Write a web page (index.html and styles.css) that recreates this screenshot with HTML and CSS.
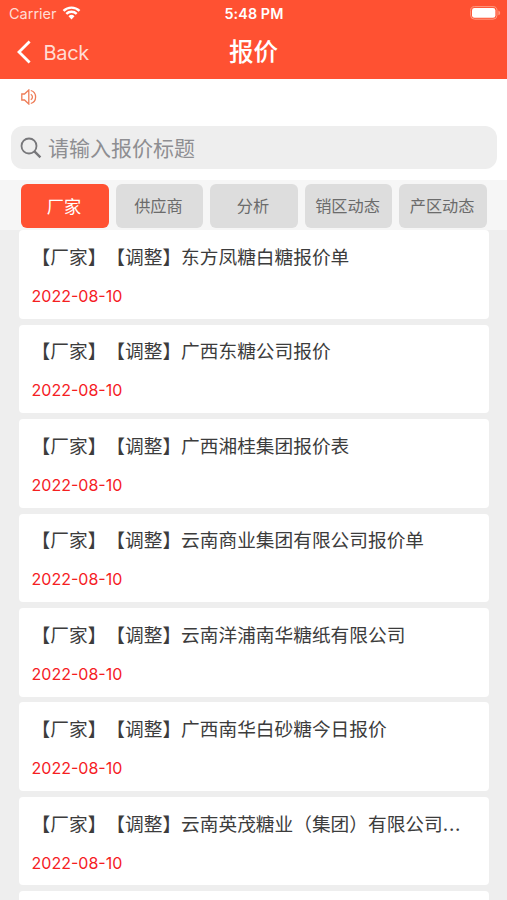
FILE: index.html
```html
<!DOCTYPE html>
<html lang="zh-CN">

<head>
    <meta charset="UTF-8">
    <title>报价</title>
    <link rel="stylesheet" href="styles.css">
</head>

<body>
    <header class="header">
        <div class="status">
            <div class="carrier">
                <span>Carrier</span>
                <svg class="wifi" width="19" height="14" viewBox="0 0 18 14">
                    <path d="M1 4.9a11.4 11.4 0 0 1 16 0M3.8 7.9a7.4 7.4 0 0 1 10.4 0" fill="none" stroke="#fff" stroke-width="2.4" />
                    <path d="M6 10.3a4.3 4.3 0 0 1 6 0L9 13.4z" fill="#fff" />
                </svg>
            </div>
            <div class="time">5:48 PM</div>
            <svg class="battery" width="31" height="14" viewBox="0 0 31 14">
                <rect x=".6" y=".6" width="26.4" height="12.6" rx="4" fill="none" stroke="#ff9a82" />
                <rect x="2" y="2" width="23.4" height="9.8" rx="2.4" fill="#fff" />
                <path d="M28.4 4.6v4.6q1.8-.7 1.8-2.3t-1.8-2.3z" fill="#ff9a82" />
            </svg>
        </div>
        <div class="nav">
            <a class="back" href="#">
                <svg width="14" height="24" viewBox="0 0 14 24">
                    <path d="M12.6 1.4L2 12l10.6 10.6" fill="none" stroke="#fff" stroke-width="2.8" />
                </svg>
                <span>Back</span>
            </a>
            <h1>报价</h1>
        </div>
    </header>

    <div class="notice">
        <svg width="16" height="16" viewBox="0 0 16 16" fill="none" stroke="#ee7d58" stroke-width="1.3">
            <path d="M.8 5h2.7L7.8 1v14L3.5 11H.8z" />
            <path d="M9.8 5.2a3.2 3.2 0 0 1 0 5.6M9.8 1.5a6.8 6.8 0 0 1 0 13" />
        </svg>
    </div>

    <div class="search">
        <div class="search-box">
            <svg width="22" height="22" viewBox="0 0 22 22" fill="none" stroke="#77777a">
                <circle cx="9" cy="9" r="7.5" stroke-width="1.8" />
                <path d="M14.4 14.4l6 6" stroke-width="2.4" />
            </svg>
            <span>请输入报价标题</span>
        </div>
    </div>

    <nav class="tabs">
        <div class="tab active">厂家</div>
        <div class="tab">供应商</div>
        <div class="tab">分析</div>
        <div class="tab">销区动态</div>
        <div class="tab">产区动态</div>
    </nav>

    <main class="list">
        <div class="card">
            <p class="title">【厂家】【调整】东方凤糖白糖报价单</p>
            <p class="date">2022-08-10</p>
        </div>
        <div class="card">
            <p class="title">【厂家】【调整】广西东糖公司报价</p>
            <p class="date">2022-08-10</p>
        </div>
        <div class="card">
            <p class="title">【厂家】【调整】广西湘桂集团报价表</p>
            <p class="date">2022-08-10</p>
        </div>
        <div class="card">
            <p class="title">【厂家】【调整】云南商业集团有限公司报价单</p>
            <p class="date">2022-08-10</p>
        </div>
        <div class="card">
            <p class="title">【厂家】【调整】云南洋浦南华糖纸有限公司</p>
            <p class="date">2022-08-10</p>
        </div>
        <div class="card">
            <p class="title">【厂家】【调整】广西南华白砂糖今日报价</p>
            <p class="date">2022-08-10</p>
        </div>
        <div class="card">
            <p class="title">【厂家】【调整】云南英茂糖业（集团）有限公司<span class="dots">...</span></p>
            <p class="date">2022-08-10</p>
        </div>
        <div class="card last"></div>
    </main>
</body>

</html>
```
FILE: styles.css
```css
* {
    box-sizing: border-box;
}

body {
    margin: 0;
    height: 900px;
    overflow: hidden;
    display: flex;
    flex-direction: column;
    background-color: #eee;
    font-family: Inter, "Noto Sans CJK SC", sans-serif;
    text-spacing-trim: space-all;
}

h1,
p {
    margin: 0;
}

svg {
    display: block;
    flex: none;
}

.header {
    flex: none;
    height: 79px;
    background-color: #ff5132;
    color: white;
}

.status {
    display: grid;
    grid-template-columns: 1fr auto 1fr;
    align-items: center;
    height: 27px;
    padding: 0 6px 0 9px;
    font-size: 14.5px;
}

.carrier {
    display: flex;
    gap: 5px;
    align-items: center;
    color: #ffdcd4;
}

.wifi {
    margin-top: -2px;
}

.time {
    margin-right: 2px;
    font-size: 14.3px;
    font-weight: 600;
    letter-spacing: 0.1px;
}

.battery {
    justify-self: end;
    margin-top: -1px;
}

.nav {
    display: grid;
    grid-template-columns: 1fr auto 1fr;
    align-items: center;
    height: 50px;
    padding: 0 17px;
}

.back {
    display: flex;
    align-items: center;
    gap: 12.5px;
    color: #ffdcd4;
    font-size: 20px;
    letter-spacing: -0.3px;
    text-decoration: none;
}

.back span {
    margin-top: 1px;
}

h1 {
    font-size: 24.5px;
    font-weight: 500;
    line-height: 50px;
}

.notice {
    flex: none;
    height: 47px;
    padding: 9.5px 21px;
    background-color: white;
}

.search {
    flex: none;
    padding: 0 10px 11px 11px;
    background-color: white;
}

.search-box {
    display: flex;
    align-items: center;
    gap: 6px;
    height: 43px;
    padding: 0 9px;
    border-radius: 12px;
    background-color: #eee;
    color: #8e8e92;
    font-size: 21px;
}

.search-box span {
    margin-top: -2px;
}

.tabs {
    flex: none;
    display: flex;
    gap: 6.8px;
    height: 50px;
    padding: 4px 20px 2px 21px;
    background-color: #f6f6f6;
}

.tab {
    flex: 1 1 0;
    padding-right: 2px;
    border-radius: 6px;
    background-color: #ddd;
    color: #6b6b6b;
    font-size: 16.2px;
    line-height: 45px;
    text-align: center;
    white-space: nowrap;
}

.tab.active {
    background-color: #ff5132;
    color: white;
    font-size: 17.2px;
}

.list {
    flex: 1;
    min-height: 0;
    overflow: hidden;
    padding: 0.3px 18px 0 19.3px;
}

.card {
    height: 88.5px;
    margin-bottom: 5.95px;
    padding: 12.7px 12.3px 0;
    border-radius: 4px;
    background-color: white;
}

.card.last {
    height: 20px;
    margin-bottom: 0;
}

.title {
    color: #3c3c3c;
    font-size: 18.7px;
    line-height: 30px;
    white-space: nowrap;
}

.dots {
    letter-spacing: 0.8px;
}

.date {
    margin-top: 12px;
    color: #f5201f;
    font-size: 16px;
    line-height: 22px;
}
```
